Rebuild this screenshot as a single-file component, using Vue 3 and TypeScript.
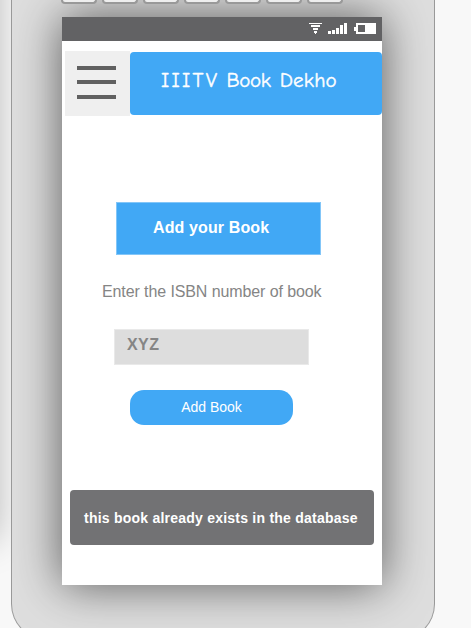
<script setup lang="ts">
const keys: number[] = [1, 2, 3, 4, 5, 6, 7]
</script>

<template>
  <div class="stage">
    <div class="neighbour"></div>
    <div class="phone">
      <div class="keys">
        <span v-for="key in keys" :key="key" class="key"></span>
      </div>
      <main class="screen">
        <div class="status">
          <svg width="70" height="13" viewBox="0 0 70 13" fill="#fff" shape-rendering="crispEdges">
            <path d="M0 0h13v1H0zM2 2h9v2H2zM4 5h5v2H4zM5 8h3v2H5zM6 8h1v3H6z" />
            <path d="M19 8h3v3h-3zM23 7h3v4h-3zM27 5h3v6h-3zM31 2h3v9h-3zM35 0h3v11h-3z" />
            <path fill-rule="evenodd" d="M47 0h20v11H47V8h-2V4h2zM49 2v7h7V2z" />
          </svg>
        </div>
        <header class="header">
          <button class="menu" type="button" aria-label="Menu">
            <svg width="39" height="33" viewBox="0 0 39 33" fill="#606060" shape-rendering="crispEdges">
              <path d="M0 0h39v4H0zM0 14h39v4H0zM0 29h39v4H0z" />
            </svg>
          </button>
          <h1 class="title"><span class="brand">IIITV</span> <span class="book">Book</span> <span class="dekho">Dekho</span></h1>
        </header>
        <h2 class="heading">Add your Book</h2>
        <p class="prompt">Enter the ISBN number of book</p>
        <div class="field">XYZ</div>
        <button class="submit" type="button">Add Book</button>
        <div class="toast">this book already exists in the database</div>
      </main>
    </div>
  </div>
</template>

<style>
body {
  margin: 0;
  overflow: hidden;
}
</style>

<style scoped>
.stage {
  position: relative;
  box-sizing: border-box;
  width: 471px;
  height: 628px;
  padding-left: 11px;
  overflow: hidden;
  background: #f8f8f8;
  font-family: "Liberation Sans", Arial, sans-serif;
}
.neighbour {
  position: absolute;
  left: -60px;
  top: -60px;
  width: 57px;
  height: 600px;
  box-shadow: 0 0 36px rgba(0, 0, 0, 0.27);
}
.phone {
  position: relative;
  box-sizing: border-box;
  width: 424px;
  height: 640px;
  padding-left: 50px;
  overflow: hidden;
  border: 1px solid #999;
  border-top: 0;
  border-radius: 0 0 36px 36px;
  background: #dedede;
}
.keys {
  position: relative;
  z-index: 1;
  display: flex;
  gap: 5px;
  height: 17px;
  margin-left: -1px;
}
.key {
  box-sizing: border-box;
  width: 36px;
  height: 4px;
  border: solid #999;
  border-width: 0 2px 2px;
  border-radius: 0 0 5px 5px;
  background: #eee;
}
.screen {
  display: flex;
  flex-direction: column;
  align-items: flex-start;
  width: 320px;
  height: 568px;
  background: #fff;
  box-shadow: 0 0 44px rgba(0, 0, 0, 0.6);
}
.status {
  box-sizing: border-box;
  display: flex;
  justify-content: flex-end;
  width: 320px;
  height: 24px;
  padding: 6px 3px 0 0;
  background: #626264;
}
.header {
  display: flex;
  margin: 10px 0 0 3px;
}
.menu {
  box-sizing: border-box;
  display: flex;
  align-items: flex-start;
  width: 65px;
  height: 65px;
  padding: 15px 0 0 12px;
  border: 0;
  background: #efefef;
}
.title {
  box-sizing: border-box;
  width: 252px;
  height: 63px;
  margin: 1px 0 0;
  padding-left: 31px;
  border-radius: 4px;
  background: #41a8f5;
  color: #fff;
  font: 400 21px/57px "Comic Neue", "Comic Sans MS", "Noto Sans", cursive;
  white-space: nowrap;
  -webkit-text-stroke: 0.4px #fff;
}
.brand {
  letter-spacing: 2.3px;
}
.book {
  letter-spacing: -0.3px;
}
.dekho {
  margin-left: 2px;
  letter-spacing: 0.2px;
}
.heading {
  box-sizing: border-box;
  width: 205px;
  height: 53px;
  margin: 86px 0 0 54px;
  padding-left: 36px;
  border: 1px solid #83c6f8;
  background: #41a8f5;
  color: #fff;
  font-size: 16px;
  line-height: 49px;
  letter-spacing: 0.12px;
}
.prompt {
  margin: 27px 0 0 40px;
  color: #858585;
  font-size: 16px;
  line-height: 20px;
  letter-spacing: -0.1px;
  white-space: nowrap;
}
.field {
  box-sizing: border-box;
  width: 195px;
  height: 36px;
  margin: 27px 0 0 52px;
  padding-left: 12px;
  border: 1px solid #e9e9e9;
  background: #ddd;
  color: #858585;
  font-size: 16px;
  font-weight: 700;
  line-height: 29px;
  letter-spacing: 0.4px;
}
.submit {
  width: 163px;
  height: 35px;
  margin: 25px 0 0 68px;
  padding: 0;
  border: 0;
  border-radius: 14px;
  background: #41a8f5;
  color: #fff;
  font: 14px/35px "Liberation Sans", Arial, sans-serif;
}
.toast {
  box-sizing: border-box;
  width: 304px;
  height: 55px;
  margin: 65px 0 0 8px;
  padding-left: 14px;
  border-radius: 4px;
  background: #727274;
  color: #fff;
  font-size: 14px;
  font-weight: 700;
  line-height: 56px;
  letter-spacing: 0.23px;
  white-space: nowrap;
}
</style>
